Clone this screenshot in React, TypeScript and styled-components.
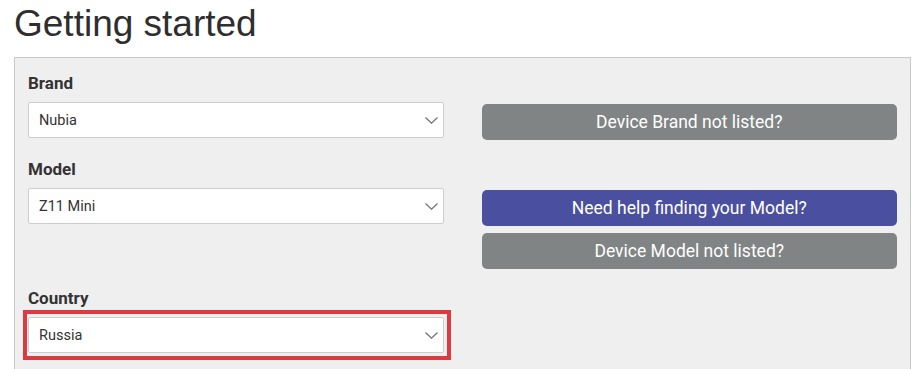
import React from "react";
import styled, { createGlobalStyle } from "styled-components";

const GlobalStyle = createGlobalStyle`
  html, body {
    margin: 0;
    padding: 0;
    background: #ffffff;
    overflow: hidden;
  }
  body {
    font-family: Roboto, "Liberation Sans", sans-serif;
    color: #333333;
  }
`;

const Page = styled.div`
  padding: 3px 4px 0 14px;
`;

const Title = styled.h1`
  margin: 0 0 12px;
  font-family: "Liberation Sans", Arial, sans-serif;
  font-size: 37px;
  line-height: 42px;
  font-weight: 400;
  color: #2e2e2e;
`;

const Panel = styled.section`
  background: #efefef;
  border: 1px solid #c8c8c8;
  padding: 13px 13px 40px;
  display: flex;
  flex-direction: column;
  gap: 17px;
`;

const Row = styled.div`
  display: grid;
  grid-template-columns: 1fr 1fr;
  column-gap: 38px;
`;

const Field = styled.div`
  display: flex;
  flex-direction: column;
`;

const Label = styled.label`
  font-size: 17px;
  line-height: 24px;
  font-weight: 700;
  color: #333333;
  margin-bottom: 7px;
`;

const SelectFrame = styled.div<{ $highlight?: boolean }>`
  position: relative;

  &::after {
    content: "";
    display: ${({ $highlight }) => ($highlight ? "block" : "none")};
    position: absolute;
    top: -7px;
    left: -5px;
    right: -7px;
    bottom: -7px;
    border: 4px solid #dc3a40;
    pointer-events: none;
  }
`;

const SelectBox = styled.div`
  height: 36px;
  box-sizing: border-box;
  background: #ffffff;
  border: 1px solid #cdcdcd;
  border-radius: 2px;
  display: flex;
  align-items: center;
  justify-content: space-between;
  padding: 0 5px 0 10px;
  font-size: 14.5px;
  color: #333333;
`;

const Chevron = styled.svg`
  width: 13px;
  height: 7px;
  color: #707070;
`;

const Actions = styled.div`
  display: flex;
  flex-direction: column;
  gap: 7px;
  padding-top: 33px;
`;

const ActionButton = styled.button<{ $primary?: boolean }>`
  height: 36px;
  border: none;
  border-radius: 5px;
  background: ${({ $primary }) => ($primary ? "#4a4f9f" : "#808484")};
  color: #ffffff;
  font-family: Roboto, "Liberation Sans", sans-serif;
  font-size: 17.5px;
  cursor: pointer;
  padding: 0;
`;

const Select = ({ value, highlight }: { value: string; highlight?: boolean }) => (
  <SelectFrame $highlight={highlight}>
    <SelectBox>
      <span>{value}</span>
      <Chevron viewBox="0 0 13 7" fill="none">
        <path d="M0.5 0.5 L6.5 6.2 L12.5 0.5" stroke="currentColor" strokeWidth="1.2" />
      </Chevron>
    </SelectBox>
  </SelectFrame>
);

export default function App() {
  return (
    <Page>
      <GlobalStyle />
      <Title>Getting started</Title>
      <Panel>
        <Row>
          <Field>
            <Label>Brand</Label>
            <Select value="Nubia" />
          </Field>
          <Actions>
            <ActionButton>Device Brand not listed?</ActionButton>
          </Actions>
        </Row>
        <Row>
          <Field>
            <Label>Model</Label>
            <Select value="Z11 Mini" />
          </Field>
          <Actions>
            <ActionButton $primary>Need help finding your Model?</ActionButton>
            <ActionButton>Device Model not listed?</ActionButton>
          </Actions>
        </Row>
        <Row>
          <Field>
            <Label>Country</Label>
            <Select value="Russia" highlight />
          </Field>
        </Row>
      </Panel>
    </Page>
  );
}
